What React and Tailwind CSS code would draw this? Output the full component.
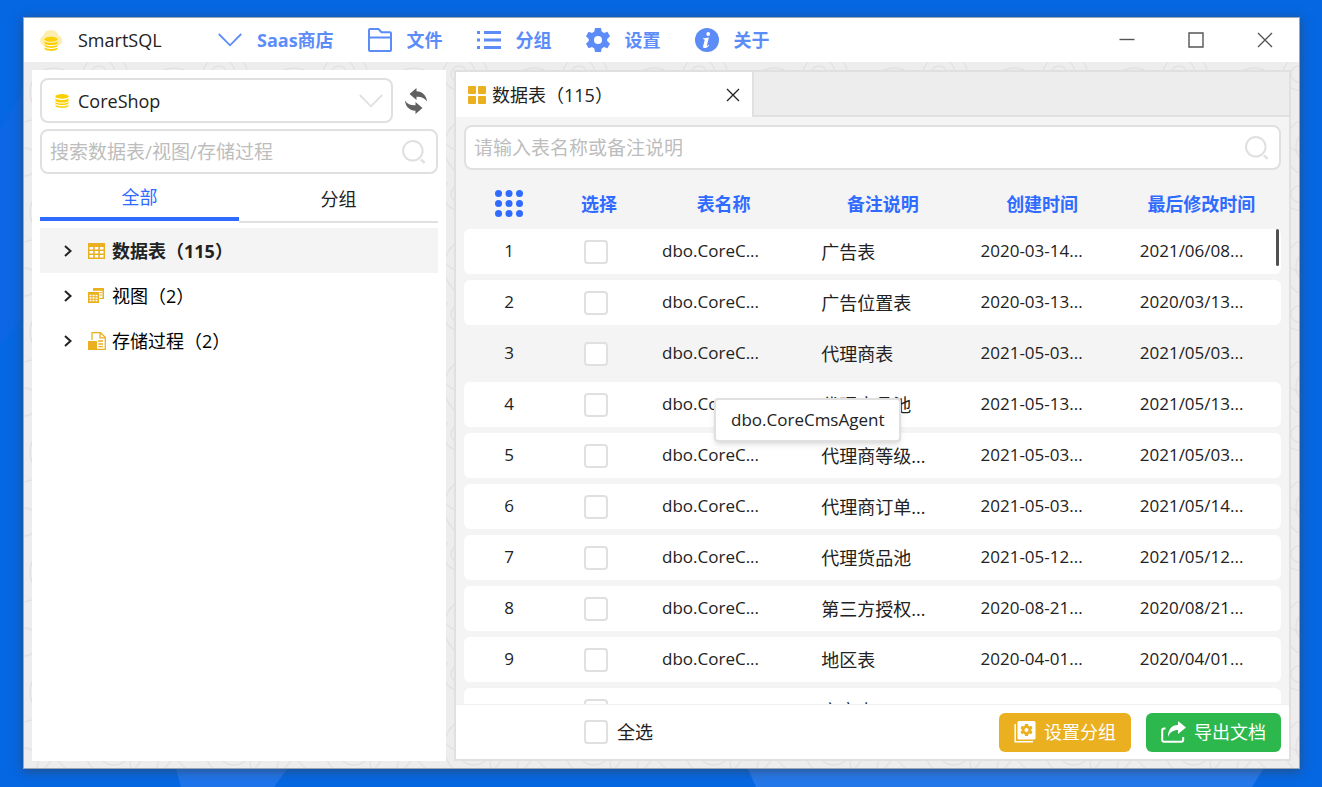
const CJK_FONT = "font-['Open_Sans','Noto_Sans_CJK_SC',sans-serif]";

const ROWS = [
  ["dbo.CoreC...", "广告表", "2020-03-14...", "2021/06/08..."],
  ["dbo.CoreC...", "广告位置表", "2020-03-13...", "2020/03/13..."],
  ["dbo.CoreC...", "代理商表", "2021-05-03...", "2021/05/03..."],
  ["dbo.CoreC...", "代理商品池", "2021-05-13...", "2021/05/13..."],
  ["dbo.CoreC...", "代理商等级...", "2021-05-03...", "2021/05/03..."],
  ["dbo.CoreC...", "代理商订单...", "2021-05-03...", "2021/05/14..."],
  ["dbo.CoreC...", "代理货品池", "2021-05-12...", "2021/05/12..."],
  ["dbo.CoreC...", "第三方授权...", "2020-08-21...", "2020/08/21..."],
  ["dbo.CoreC...", "地区表", "2020-04-01...", "2020/04/01..."],
  ["dbo.CoreC...", "文章表", "2020-03-25...", "2020/03/14..."],
];

function Coins({ className }) {
  return (
    <svg viewBox="0 0 14 14" className={className} fill="#fad000" aria-hidden="true">
      <ellipse cx="7" cy="2.4" rx="6.6" ry="2.4" />
      <path d="M.4 4.2c.8 2.4 12.400 2.400 13.200 0v2c0 3.200-13.200 3.200-13.200 0z" />
      <path d="M.4 7.700c.8 2.400 12.400 2.400 13.200 0v1c0 3.200-13.200 3.200-13.200 0z" />
      <path d="M.4 10.500c.8 2.400 12.400 2.400 13.200 0v1.100c0 3.200-13.200 3.200-13.200 0z" />
    </svg>
  );
}

function Logo() {
  return (
    <svg viewBox="0 0 24 24" className="size-6 shrink-0" aria-hidden="true">
      <path fill="#fdeeb0" d="M5 17.500a5 5 0 0 1-.8-9.500A8 8 0 0 1 19.600 7.500 5.200 5.200 0 0 1 19 17.500z" />
      <g fill="#fad000">
        <ellipse cx="12" cy="11.300" rx="6.500" ry="2.500" />
        <path d="M5.500 13.200c.8 2.300 12.200 2.300 13 0v1.500c0 3.200-13 3.200-13 0z" />
        <path d="M5.500 16.400c.8 2.300 12.200 2.300 13 0v1.200c0 3.200-13 3.200-13 0z" />
        <path d="M5.500 19.300c.8 2.300 12.200 2.300 13 0v1.300c0 3.200-13 3.200-13 0z" />
      </g>
    </svg>
  );
}

function ChevronDown({ className }) {
  return (
    <svg viewBox="0 0 24 24" className={className} fill="none" stroke="currentColor" strokeWidth="1.800" aria-hidden="true">
      <path d="M.8 6 12 17.300 23.200 6" />
    </svg>
  );
}

function FolderIcon() {
  return (
    <svg viewBox="0 0 24 24" className="size-6" fill="none" stroke="currentColor" strokeWidth="2" strokeLinejoin="round" aria-hidden="true">
      <path d="M1 22V2a1 1 0 0 1 1-1h8.500l3 3.200H22a1 1 0 0 1 1 1V22a1 1 0 0 1-1 1H2a1 1 0 0 1-1-1zM1 9.500h22" />
    </svg>
  );
}

function ListIcon() {
  return (
    <svg viewBox="0 0 24 24" className="size-6" fill="currentColor" aria-hidden="true">
      <path d="M0 3h3v3H0zM0 10.500h3v3H0zM0 18h3v3H0zM7 3h17v3H7zM7 10.500h17v3H7zM7 18h17v3H7z" />
    </svg>
  );
}

function GearShape() {
  return (
    <path
      fillRule="evenodd"
      d="M9 0h6l.7 3.600 2.300 1.300 3.400-1.200 2.600 4.600L21.200 11v2l2.800 2.700-2.600 4.600-3.400-1.200-2.300 1.300L15 24H9l-.7-3.600L6 19.100l-3.400 1.200L0 15.700 2.800 13v-2L0 8.300l2.600-4.600L6 4.900l2.300-1.300zM12 8a4 4 0 1 0 0 8 4 4 0 0 0 0-8z"
    />
  );
}

function GearIcon() {
  return (
    <svg viewBox="0 0 24 24" className="size-6" fill="currentColor" aria-hidden="true">
      <GearShape />
    </svg>
  );
}

function InfoIcon() {
  return (
    <svg viewBox="0 0 24 24" className="size-6" aria-hidden="true">
      <circle cx="12" cy="12" r="12" fill="currentColor" />
      <circle cx="13.200" cy="6" r="1.900" fill="#fff" />
      <path fill="#fff" d="M8.300 10.200c1.800 0 3.800-.3 5.600-.8l-2 8c-.2.900.3.800 1.800-.6l.5.500c-1.500 2-3 2.800-4.400 2.800-1.500 0-2-1-1.600-2.400l1.400-5.200c.2-1-.2-1.400-1.500-1.500z" />
    </svg>
  );
}

function SearchIcon() {
  return (
    <svg viewBox="0 0 24 24" className="pointer-events-none absolute inset-y-0 right-3 my-auto size-6 text-[#e0e0e0]" fill="none" stroke="currentColor" strokeWidth="2" aria-hidden="true">
      <circle cx="10.800" cy="10.800" r="9.800" />
      <path d="m19 19.500 3.600 3.300" strokeWidth="2.500" />
    </svg>
  );
}

function RefreshIcon() {
  return (
    <svg viewBox="0 0 24 26" className="h-[26px] w-6" fill="#606060" aria-hidden="true">
      <path d="M12.500 0v3.200c6 .2 10 4.200 10.500 10.300-2.300-3.600-5.500-5-10.500-4.800V12L5.500 6z" />
      <path d="M11.500 26v-3.200c-6-.2-10-4.200-10.500-10.300 2.300 3.600 5.500 5 10.500 4.800V14l7 6z" />
    </svg>
  );
}

function TableIcon() {
  return (
    <svg viewBox="0 0 18 18" className="size-[18px]" aria-hidden="true">
      <path fill="#eab020" d="M0 1h17v16H0z" />
      <path fill="#fff" d="M1.500 5h3.600v2.600H1.500zM6.700 5h3.600v2.600H6.700zM11.900 5h3.600v2.600h-3.600zM1.500 9h3.600v2.600H1.500zM6.700 9h3.600v2.600H6.700zM11.900 9h3.600v2.600h-3.600zM1.500 13h3.600v2.600H1.500zM6.700 13h3.600v2.600H6.700zM11.900 13h3.600v2.600h-3.600z" />
    </svg>
  );
}

function ViewIcon() {
  return (
    <svg viewBox="0 0 18 18" className="size-[18px]" aria-hidden="true">
      <path fill="#eab020" d="M5 1h11v11H5z" />
      <path fill="#fff" d="M6.500 3.800h8v7h-8z" />
      <path fill="#eab020" d="M11 5h3v1h-3zM11 7.500h3v1h-3z" />
      <path fill="#fff" d="M0 4h11.500v12H0z" />
      <path fill="#eab020" d="M0 5h11v11H0z" />
      <path fill="#fff" d="M1.500 7.800h2v1.400h-2zM4.500 7.800h2v1.400h-2zM7.500 7.800h2v1.400h-2zM1.500 10.300h2v1.400h-2zM4.500 10.300h2v1.400h-2zM7.500 10.300h2v1.400h-2zM1.500 12.800h2v1.400h-2zM4.500 12.800h2v1.400h-2zM7.500 12.800h2v1.400h-2z" />
    </svg>
  );
}

function ProcedureIcon() {
  return (
    <svg viewBox="0 0 18 18" className="size-[18px]" aria-hidden="true">
      <path d="M4 8V.700h8.500l4.800 4.500v12.100H9M12 1v4.800h5M10 9h5M10.500 12h4.500M10.500 14.700h4.500" fill="none" stroke="#eab020" strokeWidth="1.300" />
      <path fill="#eab020" d="M0 9h9v9H0z" />
    </svg>
  );
}

function ArrowRight() {
  return (
    <svg viewBox="0 0 8 12" className="h-3 w-2" fill="none" stroke="#222" strokeWidth="2" aria-hidden="true">
      <path d="m1 1 5.500 5L1 11" />
    </svg>
  );
}

function GroupSetIcon() {
  return (
    <svg viewBox="0 0 22 22" className="size-[22px]" aria-hidden="true">
      <path d="M1.200 3v17.800H19" fill="none" stroke="#fff" strokeWidth="1.500" />
      <rect x="3.500" y="0" width="18" height="18.500" rx="1.500" fill="#fff" />
      <g fill="#eab020" transform="translate(6.500 3) scale(.5)">
        <GearShape />
      </g>
    </svg>
  );
}

function ExportIcon() {
  return (
    <svg viewBox="0 0 25 22" className="h-[22px] w-[25px]" aria-hidden="true">
      <path d="M4.500 7.500H3.200Q1.200 7.500 1.200 9.500v9.300q0 2 2 2h17q2 0 2-2V16" fill="none" stroke="#fff" strokeWidth="2" />
      <path fill="#fff" d="M17 0l8 6.500-8 6.500V9c-5 0-8 2-10 7C7 8.500 10.500 4 17 4z" />
    </svg>
  );
}

function DotsIcon() {
  return (
    <svg viewBox="0 0 28 27" className="mx-auto h-[27px] w-7" fill="#2f6bff" aria-hidden="true">
      {[3.500, 13.500, 23.500].map((y) => [3.500, 14, 24.500].map((x) => <circle key={`${x}-${y}`} cx={x} cy={y} r="3.500" />))}
    </svg>
  );
}

function SwirlPattern() {
  return (
    <svg className="absolute inset-0 size-full" aria-hidden="true">
      <defs>
        <pattern id="swirl" width="120" height="120" patternUnits="userSpaceOnUse">
          <g fill="none" stroke="#e2e2e2" strokeWidth="1.500">
            <circle cx="30" cy="30" r="6" />
            <circle cx="30" cy="30" r="14" />
            <circle cx="30" cy="30" r="24" />
            <circle cx="90" cy="85" r="8" />
            <circle cx="90" cy="85" r="18" />
            <circle cx="90" cy="85" r="30" />
            <circle cx="0" cy="100" r="14" />
            <circle cx="120" cy="100" r="14" />
            <circle cx="75" cy="12" r="16" />
            <circle cx="75" cy="12" r="8" />
            <path d="M0 60q30-10 60 20t60-20M10 120 30 95l25 25M100 0l12 30 8-20" />
          </g>
        </pattern>
      </defs>
      <rect width="100%" height="100%" fill="url(#swirl)" />
    </svg>
  );
}

function Wallpaper() {
  return (
    <svg viewBox="0 0 1322 787" preserveAspectRatio="none" className="absolute inset-0 size-full" aria-hidden="true">
      <path fill="#1268e6" d="M0 130 24 90v225L0 345z" opacity=".6" />
      <path fill="#1e74ea" d="M175 765h115l-16 22h-93z" />
      <path fill="#2478ea" d="M746 765h520l-14 22H756z" />
    </svg>
  );
}

function MenuButton({ icon, children }) {
  return (
    <button type="button" className="flex items-center gap-[15px] text-lg font-bold whitespace-nowrap">
      {icon}
      <span>{children}</span>
    </button>
  );
}

function TreeItem({ icon, label, active }) {
  return (
    <li>
      <button
        type="button"
        className={
          active
            ? "flex h-[45px] w-full items-center bg-[#f4f4f4] pl-6 text-lg font-bold text-[#222]"
            : "flex h-[45px] w-full items-center pl-6 text-lg text-black"
        }
      >
        <ArrowRight />
        <span className="mr-1.5 ml-4">{icon}</span>
        <span>{label}</span>
      </button>
    </li>
  );
}

function Check({ id, label }) {
  return (
    <input
      type="checkbox"
      id={id}
      aria-label={label}
      className="block size-6 appearance-none rounded-[4px] border-2 border-[#e0e0e0] bg-white checked:bg-[#2f6bff]"
    />
  );
}

function Sidebar() {
  return (
    <aside className="flex w-[414px] shrink-0 flex-col bg-white p-2">
      <div className="flex items-center">
        <div className="relative min-w-0 flex-1">
          <Coins className="pointer-events-none absolute inset-y-0 left-[15px] my-auto size-3.5" />
          <select aria-label="数据库" className="h-[45px] w-full appearance-none rounded-lg border-2 border-[#e0e0e0] bg-white pl-9 text-lg text-[#222]">
            <option>CoreShop</option>
          </select>
          <ChevronDown className="pointer-events-none absolute inset-y-0 right-2.5 my-auto size-6 text-[#e0e0e0]" />
        </div>
        <button type="button" aria-label="刷新" className="flex w-[45px] justify-center">
          <RefreshIcon />
        </button>
      </div>
      <div className="relative mt-1.5">
        <input
          type="text"
          aria-label="搜索"
          placeholder="搜索数据表/视图/存储过程"
          className="h-[45px] w-full rounded-lg border-2 border-[#e0e0e0] bg-white pr-10 pl-2 text-[19px] placeholder:text-[#bdbdbd]"
        />
        <SearchIcon />
      </div>
      <div role="tablist" className="mt-0.5 grid grid-cols-2 text-lg">
        <button type="button" role="tab" aria-selected="true" className="h-[45px] border-b-4 border-[#2f6bff] text-[#2f6bff]">
          全部
        </button>
        <button type="button" role="tab" aria-selected="false" className="h-[47px] border-b-2 border-[#e0e0e0] text-[#222]">
          分组
        </button>
      </div>
      <ul className="mt-[5px]">
        <TreeItem active icon={<TableIcon />} label="数据表（115）" />
        <TreeItem icon={<ViewIcon />} label="视图（2）" />
        <TreeItem icon={<ProcedureIcon />} label="存储过程（2）" />
      </ul>
    </aside>
  );
}

function DataTable() {
  const cell = "h-[45px] overflow-hidden whitespace-nowrap";
  return (
    <div className="relative min-h-0 flex-1 overflow-hidden px-2">
      <table className="w-full table-fixed border-separate border-spacing-x-0 border-spacing-y-1.5 text-lg text-[#222]">
        <thead>
          <tr className="text-[#2f6bff]">
            <th scope="col" aria-label="序号" className="h-[47px] w-[90px] pt-2"><DotsIcon /></th>
            <th scope="col" className="w-[90px] pt-2">选择</th>
            <th scope="col" className="pt-2">表名称</th>
            <th scope="col" className="pt-2">备注说明</th>
            <th scope="col" className="pt-2">创建时间</th>
            <th scope="col" className="pt-2">最后修改时间</th>
          </tr>
        </thead>
        <tbody>
          {ROWS.map(([name, note, created, updated], i) => (
            <tr key={i} className={i === 2 ? "bg-[#f4f4f4]" : "bg-white"}>
              <td className={`${cell} rounded-l-md text-center text-[17px]`}>{i + 1}</td>
              <td className={`${cell} pl-[30px]`}><Check label={`选择 ${i + 1}`} /></td>
              <td className={`${cell} pl-[18px] text-[17px]`}>{name}</td>
              <td className={`${cell} pl-[18px]`}>{note}</td>
              <td className={`${cell} pl-[18px] text-[17px]`}>{created}</td>
              <td className={`${cell} rounded-r-md pl-[18px] text-[17px]`}>{updated}</td>
            </tr>
          ))}
        </tbody>
      </table>
      <div className="absolute top-[59px] right-2.5 h-[37px] w-[3px] rounded-full bg-[#505050]" />
      <div role="tooltip" className="absolute top-[228px] left-[258px] flex h-11 items-center rounded-[4px] border-2 border-[#e0e0e0] bg-white px-[15px] text-[17px] text-[#222] shadow-md">
        dbo.CoreCmsAgent
      </div>
    </div>
  );
}

function MainPanel() {
  return (
    <main className="flex min-w-0 flex-1 flex-col border-2 border-[#e0e0e0] bg-[#f4f4f4]">
      <div className="flex h-[45px] shrink-0 bg-[#ededed]">
        <div className="flex w-[298px] items-center border-r-2 border-[#e0e0e0] bg-white pr-3 pl-3 text-lg text-[#222]">
          <svg viewBox="0 0 18 18" className="mr-1.5 size-[18px]" fill="#eab020" aria-hidden="true">
            <rect width="8" height="8" rx="1" />
            <rect x="10" width="8" height="8" rx="1" />
            <rect y="10" width="8" height="8" rx="1" />
            <rect x="10" y="10" width="8" height="8" rx="1" />
          </svg>
          <span className="flex-1">数据表（115）</span>
          <button type="button" aria-label="关闭标签">
            <svg viewBox="0 0 14 14" className="size-3.5" fill="none" stroke="#222" strokeWidth="1.300" aria-hidden="true">
              <path d="m1 1 12 12M13 1 1 13" />
            </svg>
          </button>
        </div>
        <div className="flex-1 border-b-2 border-[#e0e0e0]" />
      </div>
      <div className="relative mx-2 mt-2">
        <input
          type="text"
          aria-label="表名称或备注说明"
          placeholder="请输入表名称或备注说明"
          className="block h-[45px] w-full rounded-lg border-2 border-[#e0e0e0] bg-white pr-10 pl-2 text-[19px] placeholder:text-[#bdbdbd]"
        />
        <SearchIcon />
      </div>
      <DataTable />
      <footer className="flex h-[55px] shrink-0 items-center border-t border-[#f0f0f0] bg-white pr-2 pl-32">
        <Check id="all" />
        <label htmlFor="all" className="ml-[9px] flex-1 text-lg text-[#222]">全选</label>
        <button type="button" className="mr-[15px] flex h-[39px] items-center gap-2 rounded-md bg-[#eab020] px-[15px] text-lg text-white">
          <GroupSetIcon />
          设置分组
        </button>
        <button type="button" className="flex h-[39px] items-center gap-2 rounded-md bg-[#2db84d] px-[15px] text-lg text-white">
          <ExportIcon />
          导出文档
        </button>
      </footer>
    </main>
  );
}

export default function App() {
  return (
    <div className={`relative flex h-screen bg-[#0667e2] pt-[17px] pr-[22px] pb-[18px] pl-[23px] ${CJK_FONT}`}>
      <Wallpaper />
      <div className="relative flex min-w-0 flex-1 flex-col border border-[#9aa7b5] bg-[#ededed] shadow-[0_2px_10px_rgba(60,60,60,0.6)]">
        <header className="flex h-11 shrink-0 items-center bg-white pl-[15px]">
          <Logo />
          <h1 className="ml-[15px] w-[140px] text-lg text-[#222]">SmartSQL</h1>
          <nav className="flex flex-1 items-center gap-[34px] text-[#5c8cf8]">
            <MenuButton icon={<ChevronDown className="size-6" />}>Saas商店</MenuButton>
            <MenuButton icon={<FolderIcon />}>文件</MenuButton>
            <MenuButton icon={<ListIcon />}>分组</MenuButton>
            <MenuButton icon={<GearIcon />}>设置</MenuButton>
            <MenuButton icon={<InfoIcon />}>关于</MenuButton>
          </nav>
          <div className="flex self-stretch">
            {[
              ["最小化", "M.5 7.500h15"],
              ["最大化", "M1 1h14v14H1z"],
              ["关闭", "m1 1 14 14M15 1 1 15"],
            ].map(([label, d]) => (
              <button key={label} type="button" aria-label={label} className="flex w-[69px] items-center justify-center">
                <svg viewBox="0 0 16 16" className="size-4" fill="none" stroke="#555" strokeWidth="1.400" aria-hidden="true">
                  <path d={d} />
                </svg>
              </button>
            ))}
          </div>
        </header>
        <div className="relative min-h-0 flex-1">
          <SwirlPattern />
          <div className="relative flex h-full gap-2 px-2 pt-2 pb-[7px]">
            <Sidebar />
            <MainPanel />
          </div>
        </div>
      </div>
    </div>
  );
}
